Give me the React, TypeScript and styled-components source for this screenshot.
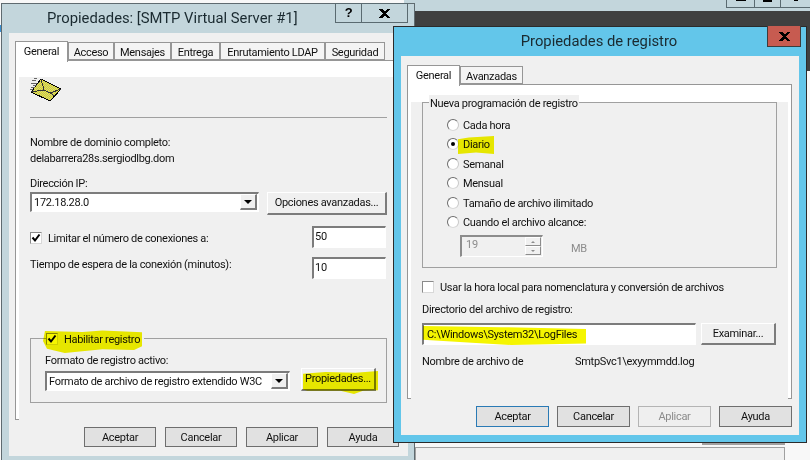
import React from 'react';
import styled, { createGlobalStyle } from 'styled-components';

const GlobalStyle = createGlobalStyle`
  html, body {
    margin: 0;
    padding: 0;
    background: #f8f8f8;
  }
  * {
    box-sizing: border-box;
  }
`;

const Desktop = styled.div`
  position: relative;
  width: 810px;
  height: 460px;
  overflow: hidden;
  background: #f8f8f8;
  font-family: Roboto, "Liberation Sans", sans-serif;
  font-size: 11px;
  letter-spacing: -0.3px;
  line-height: 18px;
  color: #111;
`;

const BackTitle = styled.div`
  position: absolute;
  left: 58px;
  top: -15px;
  font-size: 15px;
  letter-spacing: 0;
  line-height: 18px;
  white-space: nowrap;
`;

const BackTitleBar = styled.div`
  position: absolute;
  left: 404px;
  top: 0;
  right: 0;
  height: 11px;
  background: #c3d6dc;
`;

const BackDarkBar = styled.div`
  position: absolute;
  left: 415px;
  top: 11px;
  right: 0;
  height: 60px;
  background: #404040;
`;

const BackButtons = styled.div`
  position: absolute;
  left: 726px;
  top: 0;
  display: flex;
  height: 8px;
`;

const BackButton = styled.div<{ $w: number }>`
  width: ${p => p.$w}px;
  border: 1px solid #5a6a70;
  border-top: none;
  margin-right: -1px;
  display: flex;
  justify-content: center;
`;

const BackGlyph = styled.div<{ $w: number; $h: number }>`
  width: ${p => p.$w}px;
  height: ${p => p.$h}px;
  background: #000;
`;

const BackShadow = styled.div`
  position: absolute;
  left: 702px;
  top: 443px;
  width: 83px;
  height: 2px;
  background: #a0a0a0;
`;

const BackPane = styled.div`
  position: absolute;
  left: 415px;
  top: 447px;
  width: 370px;
  height: 20px;
  background: #f0f0f0;
  border: 1px solid #a0a0a0;
`;

const Sliver = styled.div`
  position: absolute;
  left: 0;
  top: 25px;
  width: 1px;
  height: 7px;
  background: #3a8fd0;
`;

const LeftWindow = styled.div`
  position: absolute;
  left: 1px;
  top: 3px;
  width: 414px;
  height: 470px;
  background: #c3d6dc;
  border: 1px solid #5f6b70;
`;

const RightWindow = styled.div`
  position: absolute;
  left: 393px;
  top: 26px;
  width: 414px;
  height: 417px;
  background: #63c6ea;
  border: 1px solid #2b2b2b;
  z-index: 2;
`;

const TitleBar = styled.div`
  height: 29px;
  font-size: 14.800px;
  letter-spacing: 0;
  line-height: 29px;
  color: #1a2a30;
  white-space: nowrap;
`;

const LeftTitle = styled(TitleBar)`
  padding-left: 45px;
`;

const RightTitle = styled(TitleBar)`
  text-align: center;
  padding-right: 2px;
`;

const TitleControls = styled.div`
  position: absolute;
  top: -1px;
  right: 6px;
  display: flex;
  height: 20px;
`;

const TitleControl = styled.div<{ $w: number }>`
  width: ${p => p.$w}px;
  border: 1px solid #5a6a70;
  border-left-width: ${p => (p.$w > 30 ? 0 : 1)}px;
  display: flex;
  align-items: center;
  justify-content: center;
  font-family: "Liberation Sans", sans-serif;
  font-weight: 700;
  font-size: 13px;
  color: #000;
`;

const CloseRed = styled.div`
  position: absolute;
  top: -1px;
  left: 373px;
  width: 34px;
  height: 21px;
  background: #c75b50;
  border: 1px solid #3c3c3c;
  border-top: none;
  display: flex;
  align-items: center;
  justify-content: center;
`;

const Client = styled.div`
  background: #f0f0f0;
`;

const LeftClient = styled(Client)`
  margin: 0 6px 0 7px;
  height: 423px;
  padding: 8px 6px 0;
`;

const RightClient = styled(Client)`
  margin: 0 7px;
  height: 379px;
  padding: 9px 7px 0 6px;
`;

const TabStrip = styled.div`
  display: flex;
  align-items: flex-end;
  height: 19px;
`;

const Tab = styled.div<{ $w: number; $active?: boolean }>`
  position: relative;
  z-index: ${p => (p.$active ? 2 : 1)};
  width: ${p => p.$w}px;
  height: ${p => (p.$active ? 21 : 18)}px;
  margin-bottom: ${p => (p.$active ? -2 : 0)}px;
  background: ${p => (p.$active ? '#fff' : '#f4f4f4')};
  border: 1px solid #969696;
  border-bottom: ${p => (p.$active ? 'none' : '1px solid #969696')};
  text-align: center;
  line-height: ${p => (p.$active ? 19 : 19)}px;
  white-space: nowrap;
`;

const Panel = styled.div`
  background: #fff;
  border: 1px solid #969696;
  padding: 0 3px 2px;
`;

const LeftPanel = styled(Panel)`
  height: 360px;
`;

const RightPanel = styled(Panel)`
  height: 315px;
`;

const PanelInner = styled.div`
  height: 100%;
  background: #f0f0f0;
  padding: 0 11px;
`;

const Envelope = styled.svg`
  display: block;
  margin-top: 16px;
`;

const Separator = styled.div`
  margin-top: 15px;
  height: 1px;
  background: #a0a0a0;
`;

const Line = styled.div<{ $top?: number }>`
  margin-top: ${p => p.$top ?? 0}px;
  height: 16px;
  white-space: nowrap;
`;

const TimeoutLabel = styled(Line)`
  line-height: 16px;
`;

const FieldRow = styled.div<{ $top: number }>`
  display: flex;
  align-items: flex-start;
  margin-top: ${p => p.$top}px;
`;

const SplitRow = styled(FieldRow)`
  justify-content: space-between;
  padding-right: 1px;
`;

const Sunken = styled.div`
  background: #fff;
  border-style: solid;
  border-width: 2px 1px 1px 2px;
  border-color: #7c7c7c #fff #fff #7c7c7c;
  white-space: nowrap;
`;

const Combo = styled(Sunken)<{ $w: number }>`
  width: ${p => p.$w}px;
  height: 20px;
  display: flex;
  align-items: flex-start;
  justify-content: space-between;
  padding: 0 1px 0 2px;
`;

const DropButton = styled.div`
  width: 17px;
  height: 16px;
  background: #f0f0f0;
  border-style: solid;
  border-width: 1px 2px 2px 1px;
  border-color: #fff #7c7c7c #7c7c7c #fff;
  display: flex;
  align-items: center;
  justify-content: center;

  &::after {
    content: '';
    border-left: 4px solid transparent;
    border-right: 4px solid transparent;
    border-top: 4px solid #000;
  }
`;

const RaisedButton = styled.div<{ $w: number; $h: number; $left: number }>`
  width: ${p => p.$w}px;
  height: ${p => p.$h}px;
  margin-left: ${p => p.$left}px;
  background: #f0f0f0;
  border-style: solid;
  border-width: 1px 2px 2px 1px;
  border-color: #fff #7c7c7c #7c7c7c #fff;
  text-align: center;
  line-height: ${p => p.$h - 3}px;
  white-space: nowrap;
`;

const NumberBox = styled(Sunken)`
  width: 74px;
  height: 22px;
  line-height: 17px;
  padding-left: 1px;
`;

const CheckRow = styled.div`
  display: flex;
  align-items: flex-start;
  gap: 6px;
  height: 16px;
  white-space: nowrap;
`;

const LimitRow = styled(CheckRow)`
  margin-top: 4px;
`;

const CheckBox = styled.div`
  width: 12px;
  height: 12px;
  margin-top: 2px;
  flex: none;
  background: #fff;
  border: 1px solid #8a8a8a;
  border-right-color: #d8d8d8;
  border-bottom-color: #d8d8d8;
  display: flex;
  align-items: center;
  justify-content: center;
`;

const GroupBox = styled.div`
  position: relative;
  border: 1px solid #a0a0a0;
`;

const LogGroup = styled(GroupBox)`
  margin-top: 59px;
  height: 65px;
  padding: 13px 10px 0 14px;
`;

const ScheduleGroup = styled(GroupBox)`
  margin-top: 17px;
  height: 166px;
  padding: 12px 0 0 24px;
`;

const Legend = styled.div`
  position: absolute;
  top: -8px;
  left: 15px;
  display: flex;
  padding-right: 4px;
  background: #f0f0f0;
`;

const ScheduleLegend = styled(Legend)`
  left: 6px;
  padding: 0 1px;
  height: 16px;
  white-space: nowrap;
`;

const LogControls = styled.div`
  display: flex;
  align-items: flex-end;
`;

const ButtonRow = styled.div<{ $gap: number; $right: number; $top: number }>`
  display: flex;
  justify-content: flex-end;
  gap: ${p => p.$gap}px;
  margin-top: ${p => p.$top}px;
  padding-right: ${p => p.$right}px;
`;

const DialogButton = styled.div<{ $w: number; $h: number; $primary?: boolean; $disabled?: boolean }>`
  width: ${p => p.$w}px;
  height: ${p => p.$h}px;
  background: ${p => (p.$disabled ? '#efefef' : '#e1e1e1')};
  border: 1px solid ${p => (p.$primary ? '#2a7ab5' : p.$disabled ? '#b4b4b4' : '#6e6e6e')};
  color: ${p => (p.$disabled ? '#8c8c8c' : '#111')};
  text-align: center;
  line-height: ${p => p.$h - 1}px;
`;

const RadioList = styled.div`
  display: grid;
  grid-auto-rows: 19.5px;
`;

const RadioRow = styled.div`
  display: flex;
  align-items: center;
  gap: 4px;
  padding-top: 2px;
  white-space: nowrap;
`;

const Radio = styled.div<{ $checked?: boolean }>`
  width: 12px;
  height: 12px;
  margin-top: -2px;
  border-radius: 50%;
  background: #fff;
  border: 1px solid;
  border-color: #6c6c6c #c8c8c8 #d8d8d8 #6c6c6c;
  display: flex;
  align-items: center;
  justify-content: center;

  &::after {
    content: '';
    width: 4px;
    height: 4px;
    border-radius: 50%;
    background: ${p => (p.$checked ? '#000' : 'transparent')};
  }
`;

const SpinRow = styled.div`
  display: flex;
  align-items: center;
  margin: 2px 0 0 13px;
  color: #8c8c8c;
`;

const SpinBox = styled.div`
  width: 83px;
  height: 22px;
  background: #f0f0f0;
  border-style: solid;
  border-width: 2px 1px 1px 2px;
  border-color: #8c8c8c #fff #fff #8c8c8c;
  display: flex;
  justify-content: space-between;
  padding: 0 1px 0 4px;
  line-height: 16px;
`;

const SpinButtons = styled.div`
  width: 16px;
  display: flex;
  flex-direction: column;
`;

const SpinButton = styled.div<{ $up?: boolean }>`
  height: 9px;
  border-style: solid;
  border-width: 1px;
  border-color: #fff #8c8c8c #8c8c8c #fff;
  display: flex;
  align-items: center;
  justify-content: center;

  &::after {
    content: '';
    border-left: 2px solid transparent;
    border-right: 2px solid transparent;
    border-${p => (p.$up ? 'bottom' : 'top')}: 2px solid #8c8c8c;
  }
`;

const Unit = styled.div`
  margin: 6px 0 0 28px;
`;

const PathInput = styled(Sunken)`
  width: 274px;
  height: 22px;
  line-height: 19px;
  padding-left: 3px;
`;

const FileNameRow = styled.div`
  display: flex;
  margin-top: 8px;
  height: 16px;
  white-space: nowrap;
`;

const FileNameLabel = styled.div`
  width: 153px;
`;

const Marker = styled.div`
  position: absolute;
  z-index: 5;
  background: #f5f500;
  mix-blend-mode: multiply;
  pointer-events: none;
`;

const HabilitarMarker = styled(Marker)`
  left: 41px;
  top: 325px;
  width: 99px;
  height: 24px;
  clip-path: polygon(2% 8%, 40% 12%, 60% 6%, 100% 14%, 100% 72%, 92% 88%, 60% 84%, 22% 100%, 4% 82%, 0 50%);
`;

const PropiedadesMarker = styled(Marker)`
  left: 301px;
  top: 367px;
  width: 75px;
  height: 23px;
  clip-path: polygon(0 12%, 30% 4%, 70% 8%, 100% 0, 100% 84%, 80% 86%, 68% 100%, 50% 86%, 6% 86%, 0 80%);
`;

const DiarioMarker = styled(Marker)`
  left: 64px;
  top: 109px;
  width: 36px;
  height: 18px;
  clip-path: polygon(0 18%, 30% 8%, 100% 0, 100% 100%, 50% 92%, 0 100%);
`;

const PathMarker = styled(Marker)`
  left: 29px;
  top: 299px;
  width: 163px;
  height: 19px;
  clip-path: polygon(0 0, 48% 6%, 100% 16%, 100% 92%, 54% 100%, 30% 88%, 0 72%);
`;

const CloseIcon = () => (
  <svg width="13" height="9" viewBox="0 0 13 9" shapeRendering="crispEdges">
    <path d="M1 0h3l2.500 2.500L9 0h3L8 4.500 12 9H9L6.500 6.500 4 9H1l4-4.500z" fill="#000" />
  </svg>
);

const CheckMark = () => (
  <svg width="10" height="10" viewBox="0 0 10 10">
    <path d="M1.500 4.500 4 7.500 8.500 1.500" fill="none" stroke="#000" strokeWidth="2" />
  </svg>
);

const MailIcon = () => (
  <Envelope width="32" height="25" viewBox="0 0 32 25" shapeRendering="crispEdges">
    <defs>
      <pattern id="dither" width="2" height="2" patternUnits="userSpaceOnUse">
        <rect width="2" height="2" fill="#f2ee3a" />
        <rect width="1" height="1" fill="#b8b86a" />
        <rect x="1" y="1" width="1" height="1" fill="#b8b86a" />
      </pattern>
    </defs>
    <path d="M11 2 31 12 20 24 1 15z" fill="url(#dither)" stroke="#000" strokeWidth="1" />
    <path d="M11 2 14 13 20 16 31 12M1 15 14 13M20 16 25 19" fill="none" stroke="#333" strokeWidth="1" />
    <path d="M1 6h6M3 8h4M1 10h4M2 3h4M4 1h3M0 12h3" stroke="#666" strokeWidth="1" />
  </Envelope>
);

const App: React.FC = () => {
  const leftTabs: [string, number][] = [
    ['Acceso', 46],
    ['Mensajes', 57],
    ['Entrega', 49],
    ['Enrutamiento LDAP', 105],
    ['Seguridad', 60],
  ];

  const schedules = ['Cada hora', 'Diario', 'Semanal', 'Mensual', 'Tamaño de archivo ilimitado', 'Cuando el archivo alcance:'];

  return (
    <Desktop>
      <GlobalStyle />
      <BackTitle>Administrador del servidor</BackTitle>
      <Sliver />
      <BackTitleBar />
      <BackDarkBar />
      <BackButtons>
        <BackButton $w={29}><BackGlyph $w={10} $h={1} /></BackButton>
        <BackButton $w={27}><BackGlyph $w={9} $h={2} /></BackButton>
        <BackButton $w={31}><BackGlyph $w={4} $h={1} /></BackButton>
      </BackButtons>
      <BackShadow />
      <BackPane />

      <LeftWindow>
        <LeftTitle>Propiedades: [SMTP Virtual Server #1]</LeftTitle>
        <TitleControls>
          <TitleControl $w={27}>?</TitleControl>
          <TitleControl $w={46}><CloseIcon /></TitleControl>
        </TitleControls>
        <LeftClient>
          <TabStrip>
            <Tab $w={53} $active>General</Tab>
            {leftTabs.map(([label, width]) => (
              <Tab key={label} $w={width}>{label}</Tab>
            ))}
          </TabStrip>
          <LeftPanel>
            <PanelInner>
              <MailIcon />
              <Separator />
              <Line $top={16}>Nombre de dominio completo:</Line>
              <Line>delabarrera28s.sergiodlbg.dom</Line>
              <Line $top={9}>Dirección IP:</Line>
              <FieldRow $top={1}>
                <Combo $w={229}>172.18.28.0<DropButton /></Combo>
                <RaisedButton $w={120} $h={23} $left={8}>Opciones avanzadas...</RaisedButton>
              </FieldRow>
              <SplitRow $top={11}>
                <LimitRow><CheckBox><CheckMark /></CheckBox>Limitar el número de conexiones a:</LimitRow>
                <NumberBox>50</NumberBox>
              </SplitRow>
              <SplitRow $top={9}>
                <TimeoutLabel>Tiempo de espera de la conexión (minutos):</TimeoutLabel>
                <NumberBox>10</NumberBox>
              </SplitRow>
              <LogGroup>
                <Legend><CheckRow><CheckBox><CheckMark /></CheckBox>Habilitar registro</CheckRow></Legend>
                <Line>Formato de registro activo:</Line>
                <LogControls>
                  <Combo $w={245}>Formato de archivo de registro extendido W3C<DropButton /></Combo>
                  <RaisedButton $w={75} $h={23} $left={11}>Propiedades...</RaisedButton>
                </LogControls>
              </LogGroup>
            </PanelInner>
          </LeftPanel>
          <ButtonRow $gap={9} $right={3} $top={7}>
            {['Aceptar', 'Cancelar', 'Aplicar', 'Ayuda'].map(label => (
              <DialogButton key={label} $w={72} $h={20}>{label}</DialogButton>
            ))}
          </ButtonRow>
        </LeftClient>
        <HabilitarMarker />
        <PropiedadesMarker />
      </LeftWindow>

      <RightWindow>
        <RightTitle>Propiedades de registro</RightTitle>
        <CloseRed><CloseIcon /></CloseRed>
        <RightClient>
          <TabStrip>
            <Tab $w={53} $active>General</Tab>
            <Tab $w={63}>Avanzadas</Tab>
          </TabStrip>
          <RightPanel>
            <PanelInner>
              <ScheduleGroup>
                <ScheduleLegend>Nueva programación de registro</ScheduleLegend>
                <RadioList>
                  {schedules.map((label, i) => (
                    <RadioRow key={label}><Radio $checked={i === 1} />{label}</RadioRow>
                  ))}
                </RadioList>
                <SpinRow>
                  <SpinBox>
                    19
                    <SpinButtons>
                      <SpinButton $up />
                      <SpinButton />
                    </SpinButtons>
                  </SpinBox>
                  <Unit>MB</Unit>
                </SpinRow>
              </ScheduleGroup>
              <FieldRow $top={11}>
                <CheckRow><CheckBox />Usar la hora local para nomenclatura y conversión de archivos</CheckRow>
              </FieldRow>
              <Line $top={6}>Directorio del archivo de registro:</Line>
              <FieldRow $top={6}>
                <PathInput>C:\Windows\System32\LogFiles</PathInput>
                <RaisedButton $w={75} $h={22} $left={5}>Examinar...</RaisedButton>
              </FieldRow>
              <FileNameRow>
                <FileNameLabel>Nombre de archivo de</FileNameLabel>
                SmtpSvc1\exyymmdd.log
              </FileNameRow>
            </PanelInner>
          </RightPanel>
          <ButtonRow $gap={8} $right={0} $top={7}>
            <DialogButton $w={73} $h={21} $primary>Aceptar</DialogButton>
            <DialogButton $w={73} $h={21}>Cancelar</DialogButton>
            <DialogButton $w={73} $h={21} $disabled>Aplicar</DialogButton>
            <DialogButton $w={73} $h={21}>Ayuda</DialogButton>
          </ButtonRow>
        </RightClient>
        <DiarioMarker />
        <PathMarker />
      </RightWindow>
    </Desktop>
  );
};

export default App;
